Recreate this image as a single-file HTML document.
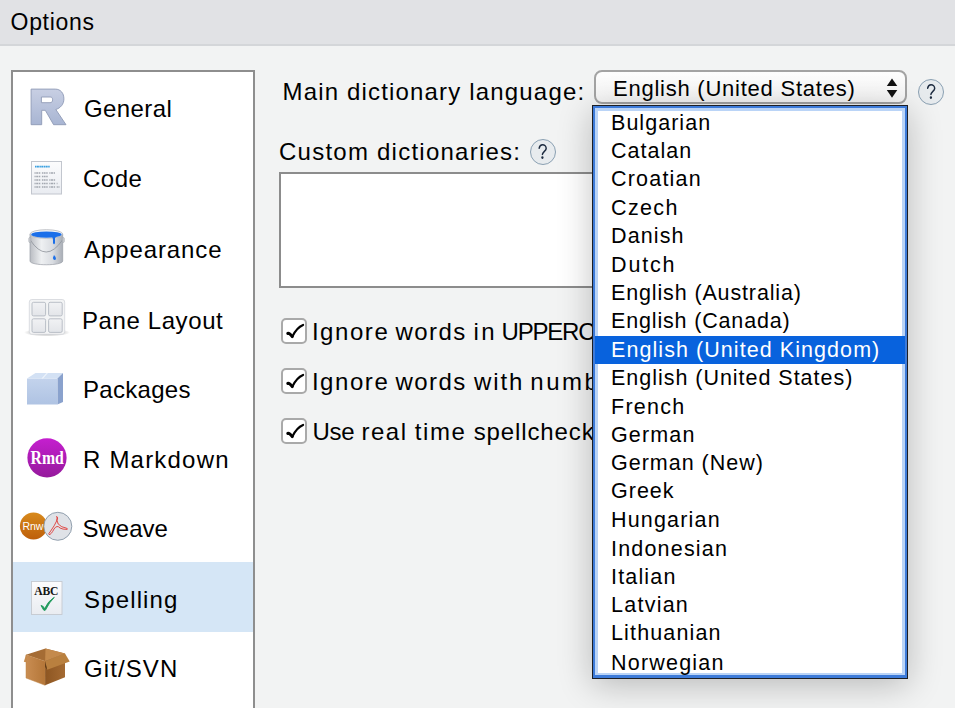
<!DOCTYPE html>
<html><head><meta charset="utf-8">
<style>
html,body{margin:0;padding:0;width:955px;height:708px;overflow:hidden;background:#f2f3f3;font-family:"Liberation Sans",sans-serif;color:#000;}
.t{position:absolute;white-space:pre;font-size:24px;line-height:24px;}
#title{position:absolute;left:0;top:0;width:955px;height:44px;background:#e1e2e5;border-bottom:2px solid #d4d6d9;}
#side{position:absolute;left:11px;top:70px;width:240px;height:660px;background:#fff;border:2px solid #8e8e8e;}
.sel{position:absolute;left:13px;top:562px;width:240px;height:70px;background:#d5e6f6;}
.cb{position:absolute;left:281px;width:22px;height:22px;border:2px solid #a9a9a9;border-radius:5px;background:#fff;}
.help{position:absolute;border:1px solid #8aa0b2;border-radius:50%;background:#e7ebee;box-sizing:border-box;color:#1d2c45;font-size:20px;text-align:center;}
svg{position:absolute;overflow:visible;}
#dd{position:absolute;left:592px;top:105px;width:316px;height:574px;background:#1d1f24;box-shadow:0 6px 32px rgba(0,0,0,0.24);}
#dd1{position:absolute;left:593px;top:106px;width:314px;height:572px;background:#3d7bd9;}
#dd2{position:absolute;left:595px;top:108px;width:310px;height:567px;background:#bad4f7;}
#dd3{position:absolute;left:598px;top:111px;width:304px;height:562px;background:#fff;}
#hl{position:absolute;left:595px;top:336px;width:310px;height:28px;background:#0862dd;}
.li{position:absolute;left:611px;font-size:21.5px;line-height:21.5px;white-space:pre;}
</style></head><body>
<div id="title"></div>
<div class="t" style="left:10.6px;top:10.6px;font-size:23px;line-height:23px;letter-spacing:0.67px">Options</div>

<div id="side"></div>
<div class="sel"></div>
<div class="t" style="left:84px;top:97px;letter-spacing:0.4px">General</div>
<div class="t" style="left:83px;top:167px;letter-spacing:0.5px">Code</div>
<div class="t" style="left:84px;top:238px;letter-spacing:0.9px">Appearance</div>
<div class="t" style="left:82px;top:309px;letter-spacing:0.6px">Pane Layout</div>
<div class="t" style="left:83px;top:377.5px;letter-spacing:0.3px">Packages</div>
<div class="t" style="left:83px;top:447.5px;letter-spacing:1.2px">R Markdown</div>
<div class="t" style="left:82.5px;top:517px;letter-spacing:0px">Sweave</div>
<div class="t" style="left:84px;top:588px;letter-spacing:1.15px">Spelling</div>
<div class="t" style="left:84px;top:656.5px;letter-spacing:1.1px">Git/SVN</div>

<!-- ICONS -->
<svg width="955" height="708" style="left:0;top:0" viewBox="0 0 955 708">
 <defs>
  <linearGradient id="gR" x1="0" y1="0" x2="0" y2="1"><stop offset="0" stop-color="#c8cfe3"/><stop offset="1" stop-color="#a8b5d3"/></linearGradient>
  <linearGradient id="gDoc" x1="0" y1="0" x2="0" y2="1"><stop offset="0" stop-color="#fcfcfd"/><stop offset="1" stop-color="#e9ecf1"/></linearGradient>
  <linearGradient id="gBkt" x1="0" y1="0" x2="1" y2="0"><stop offset="0" stop-color="#b9bcc2"/><stop offset="0.35" stop-color="#eef0f2"/><stop offset="0.7" stop-color="#d9dce1"/><stop offset="1" stop-color="#a9aeb6"/></linearGradient>
  <linearGradient id="gPane" x1="0" y1="0" x2="0" y2="1"><stop offset="0" stop-color="#f1f2f4"/><stop offset="1" stop-color="#e3e5e9"/></linearGradient>
  <linearGradient id="gCube" x1="0" y1="0" x2="0" y2="1"><stop offset="0" stop-color="#c3d3ec"/><stop offset="1" stop-color="#afc3e3"/></linearGradient>
  <linearGradient id="gRmd" x1="0" y1="0" x2="0" y2="1"><stop offset="0" stop-color="#c51fcf"/><stop offset="1" stop-color="#951a9c"/></linearGradient>
  <linearGradient id="gRnw" x1="0" y1="0" x2="0" y2="1"><stop offset="0" stop-color="#d88a1c"/><stop offset="1" stop-color="#bd5e0a"/></linearGradient>
  <linearGradient id="gBoxL" x1="0" y1="0" x2="1" y2="0"><stop offset="0" stop-color="#c98d52"/><stop offset="1" stop-color="#b47638"/></linearGradient>
  <linearGradient id="gBoxR" x1="0" y1="0" x2="1" y2="0"><stop offset="0" stop-color="#8d5622"/><stop offset="1" stop-color="#a46a32"/></linearGradient>
  <radialGradient id="gShadow"><stop offset="0" stop-color="rgba(0,0,0,0.5)"/><stop offset="1" stop-color="rgba(0,0,0,0)"/></radialGradient>
 </defs>
 <!-- R -->
 <path fill="url(#gR)" stroke="#8e9ab6" stroke-width="0.9" fill-rule="evenodd"
  d="M31.1 89.1 H55.3 C60.6 89.1 63.9 93.2 63.9 98.9 C63.9 104.4 60.3 108.1 55.8 109.5 L66 124.7 H53.6 L45.3 110.3 H41.7 V124.7 H31.1 Z M41.4 97 H50.2 C52 97 52.6 98.2 52.6 99.8 C52.6 101.5 51.9 102.7 50 102.7 H41.4 Z"/>
 <!-- Code doc -->
 <rect x="31.5" y="161.5" width="30" height="32.5" fill="url(#gDoc)" stroke="#c2c6ce" stroke-width="1"/>
 <path d="M35 166.6 H50" stroke="#3aa0e0" stroke-width="1.6" stroke-dasharray="1.5 0.4 2 0.5"/>
 <g stroke="#a3a8b0" stroke-width="1.3" stroke-dasharray="1.2 0.5 2 0.6 1.5 1.6">
  <path d="M34.5 173 H55"/>
  <path d="M34.5 176.5 H48.5"/>
  <path d="M34.5 180 H56.5"/>
  <path d="M34.5 183.5 H57.5"/>
  <path d="M34.5 187 H59.5"/>
 </g>
 <!-- Bucket -->
 <path d="M30 234 V261 C30 266 62.7 266 62.7 261 V234 Z" fill="url(#gBkt)" stroke="#9a9ea6" stroke-width="0.7"/>
 <ellipse cx="46.35" cy="234" rx="16.35" ry="4.3" fill="#f5f6f7" stroke="#a7abb2" stroke-width="0.7"/>
 <ellipse cx="46.4" cy="234.6" rx="15.2" ry="3.2" fill="#1b6fe9"/>
 <path d="M51.5 236.5 Q53 237 53 240 V243 Q54 245.5 55 243 V238 Q55.8 236.6 57 236.2 Z" fill="#1b6fe9"/>
 <path d="M54 255 Q52.3 258 53.5 259.5 Q55 260.5 56 259 Q56.5 257.5 54 255 Z" fill="#1b6fe9"/>
 <path d="M30.2 240 Q46 264 62.5 240" fill="none" stroke="#8e939b" stroke-width="0.8"/>
 <rect x="28.8" y="237.5" width="2" height="5" rx="1" fill="#c9ccd1" stroke="#9a9ea6" stroke-width="0.5"/>
 <rect x="62.3" y="237.5" width="2" height="5" rx="1" fill="#c9ccd1" stroke="#9a9ea6" stroke-width="0.5"/>
 <!-- Pane layout -->
 <ellipse cx="47" cy="332.5" rx="23" ry="4" fill="url(#gShadow)"/>
 <rect x="29.3" y="299.5" width="35.4" height="34.8" rx="2.5" fill="#f3f4f5" stroke="#d3d6da" stroke-width="0.8"/>
 <g fill="url(#gPane)" stroke="#b3b9c2" stroke-width="0.9">
  <rect x="32" y="302.3" width="13.6" height="13.6" rx="1.5"/>
  <rect x="48.6" y="302.3" width="13.6" height="13.6" rx="1.5"/>
  <rect x="32" y="318.8" width="13.6" height="13.6" rx="1.5"/>
  <rect x="48.6" y="318.8" width="13.6" height="13.6" rx="1.5"/>
 </g>
 <!-- Packages cube -->
 <polygon points="27,378.6 35.5,373 63,373 57.4,378.6" fill="#d3e1f4"/>
 <polygon points="57.4,378.6 63,373 63,402 57.4,404.5" fill="#8aa2cd"/>
 <rect x="27" y="378.6" width="30.4" height="25.9" fill="url(#gCube)"/>
 <polygon points="41.5,378.6 46.5,373 48,373 43,378.6" fill="#eef4fb"/>
 <!-- Rmd -->
 <circle cx="47" cy="457.8" r="19.6" fill="url(#gRmd)"/>
 <text x="30.5" y="463.5" font-family="Liberation Serif" font-weight="bold" font-size="19.5" fill="#fff" textLength="33.3" lengthAdjust="spacingAndGlyphs">Rmd</text>
 <!-- Sweave -->
 <circle cx="33.5" cy="526" r="13.6" fill="url(#gRnw)"/>
 <text x="22.4" y="529.8" font-family="Liberation Sans" font-size="11.8" fill="#fff" textLength="21" lengthAdjust="spacingAndGlyphs">Rnw</text>
 <circle cx="57.8" cy="526.3" r="14" fill="#dfe2e7" stroke="#8796a6" stroke-width="0.9"/>
 <path d="M56.6 516.4 Q58.5 517.5 56.6 521 Q55 525 50 532 Q48 534 49 534.5 Q51 535 54 529 Q57 524.5 60 528 Q62.6 529.5 67.2 529.4 Q68 528.5 66 528 Q61.5 527.5 58.2 524 Q56.2 520 57.2 517 Z" fill="none" stroke="#e0302c" stroke-width="0.85" stroke-linejoin="round"/>
 <!-- Spelling -->
 <rect x="31.5" y="581.5" width="30.5" height="33" fill="url(#gDoc)" stroke="#c5c9d0" stroke-width="0.9"/>
 <text x="34.2" y="595.2" font-family="Liberation Serif" font-weight="bold" font-size="11.6" fill="#151515" textLength="24.2" lengthAdjust="spacing">ABC</text>
 <path d="M41 605.5 Q42.5 605 44.7 608.6 Q48 601 54.3 597.3 Q49.5 602 45.5 610 Q44.5 611 43.6 610 Z" fill="#1f9a5c" stroke="#1f9a5c" stroke-width="0.9" stroke-linejoin="round"/>
 <!-- Git box -->
 <polygon points="26,654.8 45.5,648.5 65,653.6 45.1,661.2" fill="#a56c34"/>
 <polygon points="45.5,648.5 65,653.6 45.1,661.2" fill="#c48a4c"/>
 <polygon points="26,654.8 45.1,661.2 45.1,685.3 26,678" fill="url(#gBoxL)" stroke="#bf8446" stroke-width="0.5" stroke-linejoin="round"/>
 <polygon points="45.1,661.2 65,653.6 65,677.3 45.1,685.3" fill="url(#gBoxR)"/>
 <polygon points="26,654.8 23.8,661.8 26.5,662.2" fill="#c58a4c"/>
 <polygon points="45.1,661.2 65,653.6 69.7,661.6 47.2,669.7" fill="#b9803f"/>
 <polygon points="45.1,661.2 47.2,669.7 45.1,667" fill="#5e3a16"/>
</svg>

<div class="t" style="left:282.5px;top:79.5px;letter-spacing:1.17px">Main dictionary language:</div>
<div class="t" style="left:279px;top:139.5px;letter-spacing:1.24px">Custom dictionaries:</div>
<div class="help" style="left:529.5px;top:139px;width:26px;height:26px"></div>
<svg width="955" height="708" style="left:0;top:0" viewBox="0 0 955 708"><g transform="translate(542.5 152) scale(0.92 1)" fill="none" stroke="#1d2b40" stroke-width="1.6" stroke-linecap="round"><path d="M-3.6 -3.9 C-3.1 -6.2 -1.7 -7.2 0 -7.2 C2.2 -7.2 4 -5.7 4 -3.6 C4 -1.1 0.1 -0.3 -0.1 2.4"/><circle cx="-0.1" cy="5.6" r="0.6" stroke-width="1.4" fill="#1d2b40"/></g></svg>
<div style="position:absolute;left:279px;top:172px;width:617px;height:112px;border:2px solid #8c8c8c;background:#fff"></div>

<div class="cb" style="top:318px"></div>

<div class="cb" style="top:368px"></div>

<div class="cb" style="top:418px"></div>

<div class="t" style="left:311.9px;top:320px;letter-spacing:1.56px">Ignore</div><div class="t" style="left:395.4px;top:320px;letter-spacing:1.45px">words</div><div class="t" style="left:473.5px;top:320px;letter-spacing:2.5px">in</div><div class="t" style="left:501.5px;top:320px;letter-spacing:-1.2px">UPPERCASE</div>
<div class="t" style="left:311.9px;top:370px;letter-spacing:1.56px">Ignore</div><div class="t" style="left:395.4px;top:370px;letter-spacing:1.45px">words</div><div class="t" style="left:474px;top:370px;letter-spacing:1.9px">with</div><div class="t" style="left:530.3px;top:370px;letter-spacing:2.5px">numbers</div>
<div class="t" style="left:312.4px;top:420px;letter-spacing:-0.2px">Use</div><div class="t" style="left:361.4px;top:420px;letter-spacing:1.567px">real</div><div class="t" style="left:414.7px;top:420px;letter-spacing:1.633px">time</div><div class="t" style="left:473.7px;top:420px;letter-spacing:0.878px">spellchecking</div>
<svg width="955" height="708" style="left:0;top:0" viewBox="0 0 955 708">
 <g transform="translate(0 0)" fill="none" stroke="#000" stroke-linecap="round" stroke-linejoin="round">
  <path d="M287.8 333.4 Q289.2 332.6 292.3 336.6" stroke-width="3"/>
  <path d="M292.3 336.6 Q296.5 327.6 303.1 324.9" stroke-width="2.2"/>
 </g>
 <g transform="translate(0 50)" fill="none" stroke="#000" stroke-linecap="round" stroke-linejoin="round">
  <path d="M287.8 333.4 Q289.2 332.6 292.3 336.6" stroke-width="3"/>
  <path d="M292.3 336.6 Q296.5 327.6 303.1 324.9" stroke-width="2.2"/>
 </g>
 <g transform="translate(0 100)" fill="none" stroke="#000" stroke-linecap="round" stroke-linejoin="round">
  <path d="M287.8 333.4 Q289.2 332.6 292.3 336.6" stroke-width="3"/>
  <path d="M292.3 336.6 Q296.5 327.6 303.1 324.9" stroke-width="2.2"/>
 </g>
</svg>

<!-- select -->
<div style="position:absolute;left:593.5px;top:70px;width:309px;height:30px;border:2px solid #a3a3a3;border-radius:8px;background:linear-gradient(#fdfdfd,#f4f4f4);"></div>
<div class="li" style="left:613px;top:77.8px;font-size:22px;line-height:22px;letter-spacing:0.76px">English (United States)</div>
<svg width="955" height="708" style="left:0;top:0" viewBox="0 0 955 708">
 <polygon points="892,78.4 897.3,86 886.8,86" fill="#111"/>
 <polygon points="886.8,90 897.3,90 892,97.8" fill="#111"/>
</svg>
<div class="help" style="left:918px;top:79px;width:26px;height:26px"></div>
<svg width="955" height="708" style="left:0;top:0" viewBox="0 0 955 708"><g transform="translate(931 92) scale(0.92 1)" fill="none" stroke="#1d2b40" stroke-width="1.6" stroke-linecap="round"><path d="M-3.6 -3.9 C-3.1 -6.2 -1.7 -7.2 0 -7.2 C2.2 -7.2 4 -5.7 4 -3.6 C4 -1.1 0.1 -0.3 -0.1 2.4"/><circle cx="-0.1" cy="5.6" r="0.6" stroke-width="1.4" fill="#1d2b40"/></g></svg>

<!-- dropdown -->
<div id="dd"></div><div id="dd1"></div><div id="dd2"></div><div id="dd3"></div>
<div id="hl"></div>
<div class="li" style="top:112.60px;letter-spacing:1.037px">Bulgarian</div>
<div class="li" style="top:140.80px;letter-spacing:1.033px">Catalan</div>
<div class="li" style="top:169.00px;letter-spacing:1.200px">Croatian</div>
<div class="li" style="top:198.10px;letter-spacing:1.375px">Czech</div>
<div class="li" style="top:226.30px;letter-spacing:1.120px">Danish</div>
<div class="li" style="top:254.60px;letter-spacing:1.850px">Dutch</div>
<div class="li" style="top:282.50px;letter-spacing:0.861px">English (Australia)</div>
<div class="li" style="top:310.75px;letter-spacing:0.840px">English (Canada)</div>
<div class="li" style="top:340.00px;letter-spacing:1.065px;color:#fff">English (United Kingdom)</div>
<div class="li" style="top:368.20px;letter-spacing:0.973px">English (United States)</div>
<div class="li" style="top:396.50px;letter-spacing:1.280px">French</div>
<div class="li" style="top:424.80px;letter-spacing:1.140px">German</div>
<div class="li" style="top:452.80px;letter-spacing:0.991px">German (New)</div>
<div class="li" style="top:480.60px;letter-spacing:1.000px">Greek</div>
<div class="li" style="top:510.40px;letter-spacing:1.175px">Hungarian</div>
<div class="li" style="top:538.60px;letter-spacing:1.189px">Indonesian</div>
<div class="li" style="top:566.80px;letter-spacing:1.167px">Italian</div>
<div class="li" style="top:594.50px;letter-spacing:1.250px">Latvian</div>
<div class="li" style="top:622.80px;letter-spacing:1.144px">Lithuanian</div>
<div class="li" style="top:652.50px;letter-spacing:1.213px">Norwegian</div>
</body></html>
